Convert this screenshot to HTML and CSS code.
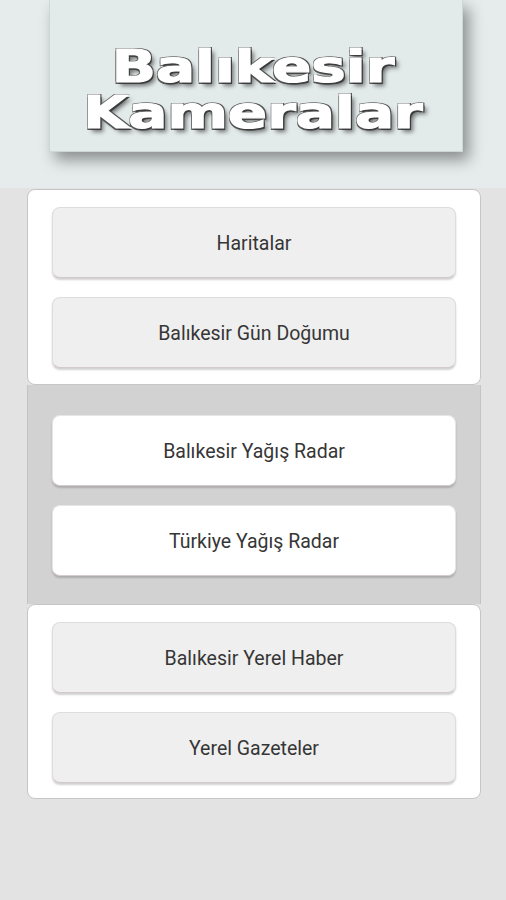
FILE: index.html
```html
<!DOCTYPE html>
<html lang="tr">
<head>
  <meta charset="UTF-8" />
  <meta name="viewport" content="width=device-width, initial-scale=1" />
  <title>Balıkesir Kameralar</title>
  <link rel="stylesheet" href="styles.css">
</head>
<body>
  <header class="header">
    <div class="banner">
      <h1 class="banner-title">
        <span class="banner-line">Balıkesir</span>
        <span class="banner-line">Kameralar</span>
      </h1>
    </div>
  </header>

  <main class="menu">
    <section class="card">
      <button class="menu-btn">Haritalar</button>
      <button class="menu-btn">Balıkesir Gün Doğumu</button>
    </section>

    <section class="band">
      <button class="menu-btn menu-btn-white">Balıkesir Yağış Radar</button>
      <button class="menu-btn menu-btn-white">Türkiye Yağış Radar</button>
    </section>

    <section class="card">
      <button class="menu-btn">Balıkesir Yerel Haber</button>
      <button class="menu-btn">Yerel Gazeteler</button>
    </section>
  </main>
</body>
</html>
```

FILE: styles.css
```css
* {
  box-sizing: border-box;
}
body {
  margin: 0;
  background: #e3e3e3;
  font-family: Roboto, 'Noto Sans', sans-serif;
  min-height: 900px;
}
.header {
  height: 188px;
  background: #e6ecec;
  overflow: hidden;
}
.banner {
  margin-left: 49px;
  width: 414px;
  height: 152px;
  padding-top: 44px;
  background: #e3eaea;
  border: 1px solid #cfd6d6;
  border-top: none;
  box-shadow: 6px 8px 14px rgba(0, 0, 0, 0.4);
}
.banner-title {
  margin: 0 0 0 -6px;
  font-family: 'DejaVu Sans', sans-serif;
  font-weight: bold;
  font-size: 45px;
  text-align: center;
  color: #fff;
  transform: scaleX(1.29);
  -webkit-text-stroke: 1.2px #fff;
  text-shadow:
    1.5px 1.5px 0 #3c3c3c,
    -1px -1px 0 #6a6a6a,
    1.5px -1px 0 #555,
    -1px 1.5px 0 #555,
    3px 4px 4px rgba(0, 0, 0, 0.5);
}
.banner-line {
  display: block;
  line-height: 46px;
}
.menu {
  margin: 1px 0 0 27px;
  width: 454px;
  display: flex;
  flex-direction: column;
}
.card {
  background: #fff;
  border: 1px solid #c6c6c6;
  border-radius: 8px;
  padding: 17px 24px 15px;
  display: flex;
  flex-direction: column;
  gap: 19px;
}
.card:first-child {
  padding-bottom: 16px;
}
.band {
  background: #d2d2d2;
  border-left: 1px solid #c4c4c4;
  border-right: 1px solid #c4c4c4;
  padding: 30px 24px 28px;
  display: flex;
  flex-direction: column;
  gap: 19px;
}
.menu-btn {
  height: 71px;
  width: 100%;
  padding-top: 3px;
  background: #efefef;
  border: 1px solid #e0dcdc;
  border-bottom-color: #d3c9c9;
  border-radius: 8px;
  box-shadow: 0 2px 2px rgba(0, 0, 0, 0.18);
  font-family: Roboto, 'Noto Sans', sans-serif;
  font-size: 19.5px;
  color: #363636;
  cursor: pointer;
}
.menu-btn-white {
  background: #fff;
  border-color: #e6e6e6;
  border-bottom-color: #d6cccc;
}
```
